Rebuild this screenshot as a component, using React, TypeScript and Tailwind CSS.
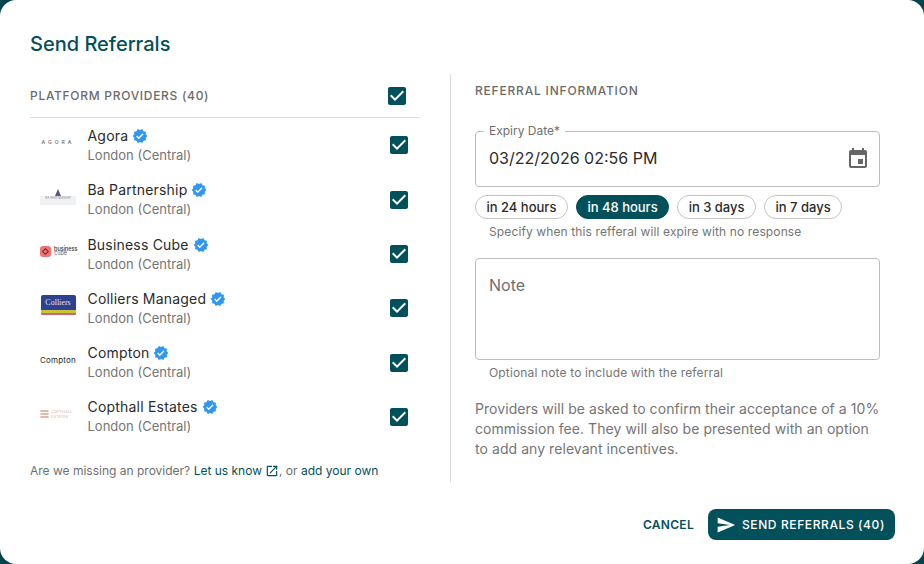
import React from 'react';

const TEAL = '#02505a';

const PROVIDERS = [
  { name: 'Agora', logo: 'agora' },
  { name: 'Ba Partnership', logo: 'ba' },
  { name: 'Business Cube', logo: 'cube' },
  { name: 'Colliers Managed', logo: 'colliers' },
  { name: 'Compton', logo: 'compton' },
  { name: 'Copthall Estates', logo: 'copthall' },
];

const Check: React.FC = () => (
  <svg viewBox="0 0 24 24" className="w-6 h-6 shrink-0" fill={TEAL}>
    <path d="M19 3H5c-1.11 0-2 .9-2 2v14c0 1.1.89 2 2 2h14c1.11 0 2-.9 2-2V5c0-1.1-.89-2-2-2zm-9 14l-5-5 1.41-1.41L10 14.17l7.59-7.59L19 8l-9 9z" />
  </svg>
);

const Verified: React.FC = () => (
  <svg viewBox="0 0 24 24" className="w-4 h-4 shrink-0" fill="#2e96f3">
    <path d="m23 12-2.44-2.79.34-3.69-3.61-.82-1.89-3.2L12 2.96 8.6 1.5 6.71 4.69 3.1 5.5l.34 3.7L1 12l2.44 2.79-.34 3.7 3.61.82L8.6 22.5l3.4-1.47 3.4 1.46 1.89-3.19 3.61-.82-.34-3.69L23 12zm-12.91 4.72-3.8-3.81 1.48-1.48 2.32 2.33 5.85-5.87 1.48 1.48-7.33 7.35z" />
  </svg>
);

const Logo: React.FC<{ kind: string }> = ({ kind }) => {
  if (kind === 'agora') {
    return <span className="text-[5px] leading-[8px] tracking-[3px] text-[#777] font-semibold whitespace-nowrap">AGORA</span>;
  }
  if (kind === 'ba') {
    return (
      <div className="flex flex-col items-center w-9">
        <div className="w-0 h-0 border-x-[3px] border-x-transparent border-b-[7px] border-b-[#55558f]" />
        <div className="w-9 h-[9px] bg-[#f0f1f3] text-[3px] leading-[5px] text-center text-[#8a8a8a] whitespace-nowrap overflow-hidden">
          BA PARTNERSHIP
        </div>
      </div>
    );
  }
  if (kind === 'cube') {
    return (
      <div className="flex items-center gap-[3px] w-9">
        <div className="w-[11px] h-[11px] rounded-[3px] bg-[#ee7476] flex items-center justify-center shrink-0">
          <div className="w-[5px] h-[5px] border border-[#7a2226] rotate-45" />
        </div>
        <div className="flex flex-col text-[5.5px] leading-[4.5px] text-[#333] font-medium">
          <span>business</span>
          <span className="text-[#666] font-normal">cube</span>
        </div>
      </div>
    );
  }
  if (kind === 'colliers') {
    return (
      <div className="w-[35px] h-[20px] rounded-[2px] overflow-hidden flex flex-col bg-[#2c4290]">
        <div className="flex-1 text-[8px] leading-[15px] text-center text-[#dfe4f2] font-['Liberation_Serif',serif]">
          Colliers
        </div>
        <div className="h-[3px] bg-[#c9c43a]" />
        <div className="h-[2px] bg-[#c9667a]" />
      </div>
    );
  }
  if (kind === 'compton') {
    return <span className="text-[8px] tracking-[0.2px] text-[#1d2b2b] whitespace-nowrap">Compton</span>;
  }
  return (
    <div className="flex items-center gap-[2px] w-9">
      <div className="w-[9px] flex flex-col gap-[1px] shrink-0">
        <div className="h-[2px] border border-[#e2b9a4] rounded-full" />
        <div className="h-[2px] border border-[#e2b9a4] rounded-full" />
        <div className="h-[2px] border border-[#e2b9a4] rounded-full" />
      </div>
      <div className="flex flex-col text-[4px] leading-[5px] text-[#d9b6a4] whitespace-nowrap">
        <span>COPTHALL</span>
        <span>ESTATES</span>
      </div>
    </div>
  );
};

const Chip: React.FC<{ label: string; active?: boolean }> = ({ label, active }) => (
  <span
    className={`h-6 px-[10.5px] rounded-full border text-[13px] leading-[22px] font-medium ${
      active ? 'bg-[#02505a] border-[#02505a] text-white' : 'bg-white border-[#c4c4c4] text-[#2b2b2b]'
    }`}
  >
    {label}
  </span>
);

export default function App() {
  return (
    <div className="w-[924px] h-[564px] bg-[#02434d] font-['Inter',sans-serif] overflow-hidden">
      <div className="w-full h-full bg-white rounded-2xl flex flex-col px-[30px]">
        <h2 className="mt-[31px] text-[20px] leading-[26px] font-medium text-[#02505a]">
          Send Referrals
        </h2>

        <div className="mt-[17px] flex h-[408px]">
          <div className="w-[389px] flex flex-col">
            <div className="h-[44px] flex items-center justify-between pr-[10px] border-b border-[#dcdcdc]">
              <span className="text-xs font-medium tracking-[0.7px] text-[#6b6b6b]">PLATFORM PROVIDERS (40)</span>
              <Check />
            </div>
            <div className="pt-[0.3px] flex flex-col">
              {PROVIDERS.map((p) => (
                <div key={p.name} className="h-[54.3px] flex items-center pl-[10px] pr-[8px]">
                  <div className="w-9 flex justify-center shrink-0 mb-[6px]">
                    <Logo kind={p.logo} />
                  </div>
                  <div className="ml-[11.5px] flex-1">
                    <div className="flex items-center gap-[4px] text-sm leading-5 tracking-[0.2px] text-[#2b2b2b]">
                      {p.name}
                      <Verified />
                    </div>
                    <div className="text-[13px] leading-[19px] text-[#757575]">London (Central)</div>
                  </div>
                  <Check />
                </div>
              ))}
            </div>
            <div className="mt-[19px] flex items-center text-xs text-[#6f6f6f]">
              Are we missing an provider?&nbsp;
              <span className="text-[#02505a]">Let us know</span>
              <svg viewBox="0 0 24 24" className="w-3.5 h-3.5 ml-[3px]" fill={TEAL}>
                <path d="M19 19H5V5h7V3H5c-1.11 0-2 .9-2 2v14c0 1.1.89 2 2 2h14c1.1 0 2-.9 2-2v-7h-2v7zM14 3v2h3.59l-9.83 9.83 1.41 1.41L19 6.41V10h2V3h-7z" />
              </svg>
              ,&nbsp;or&nbsp;<span className="text-[#02505a]">add your own</span>
            </div>
          </div>

          <div className="ml-[31px] w-px bg-[#dcdcdc]" />

          <div className="ml-[24px] w-[405px] flex flex-col">
            <div className="mt-[9px] text-xs leading-[16px] font-medium tracking-[0.8px] text-[#6b6b6b]">
              REFERRAL INFORMATION
            </div>
            <div className="relative mt-[32px] h-[56px] rounded border border-[#bdbdbd] flex items-center justify-between pl-[13px] pr-[9px]">
              <span className="absolute -top-[9px] left-[8px] bg-white px-[5px] text-xs leading-4 text-[#6f6f6f]">
                Expiry Date*
              </span>
              <span className="text-base text-[#2b2b2b] mb-[2px]">03/22/2026 02:56 PM</span>
              <svg viewBox="0 0 24 24" className="w-6 h-6" fill="#666">
                <path d="M17 12h-5v5h5v-5zM16 1v2H8V1H6v2H5c-1.11 0-1.99.9-1.99 2L3 19c0 1.1.89 2 2 2h14c1.1 0 2-.9 2-2V5c0-1.1-.9-2-2-2h-1V1h-2zm3 18H5V8h14v11z" />
              </svg>
            </div>
            <div className="mt-[8px] flex gap-[8px]">
              <Chip label="in 24 hours" />
              <Chip label="in 48 hours" active />
              <Chip label="in 3 days" />
              <Chip label="in 7 days" />
            </div>
            <div className="mt-[4px] pl-[14px] text-xs leading-[18px] tracking-[0.12px] text-[#757575]">
              Specify when this refferal will expire with no response
            </div>
            <div className="mt-[17px] h-[102px] rounded border border-[#bdbdbd] pl-[13px] pt-[16px] text-base leading-5 text-[#6f6f6f]">
              Note
            </div>
            <div className="mt-[4px] pl-[14px] text-xs leading-[18px] tracking-[0.15px] text-[#757575]">
              Optional note to include with the referral
            </div>
            <p className="mt-[17px] text-sm leading-5 tracking-[0.06px] text-[#757575]">
              Providers will be asked to confirm their acceptance of a 10% commission fee. They will also be presented with an option to add any relevant incentives.
            </p>
          </div>
        </div>

        <div className="mt-[27px] flex items-center justify-end gap-[14px] -mr-[1px]">
          <span className="text-xs font-semibold tracking-[0.3px] text-[#02505a]">CANCEL</span>
          <div className="h-[31px] w-[187px] rounded-lg bg-[#02505a] flex items-center pl-[8px] gap-[6px] text-white">
            <svg viewBox="0 0 24 24" className="w-5 h-5" fill="#fff">
              <path d="M2.01 21 23 12 2.01 3 2 10l15 2-15 2z" />
            </svg>
            <span className="text-xs font-medium tracking-[0.6px] whitespace-nowrap">SEND REFERRALS (40)</span>
          </div>
        </div>
      </div>
    </div>
  );
}
